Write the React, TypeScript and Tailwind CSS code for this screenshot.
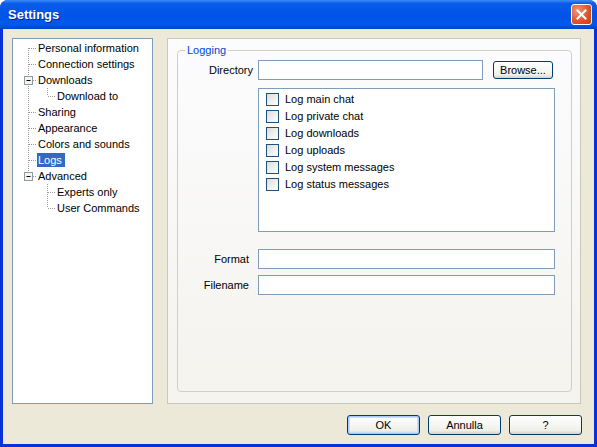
import type { ReactNode } from 'react';

const font = "font-['Liberation_Sans',Arial,sans-serif]";

type TreeItem = {
  label: string;
  level: 1 | 2;
  first?: boolean;
  last?: boolean;
  expander?: boolean;
  parentLast?: boolean;
  selected?: boolean;
};

const treeItems: TreeItem[] = [
  { label: 'Personal information', level: 1, first: true },
  { label: 'Connection settings', level: 1 },
  { label: 'Downloads', level: 1, expander: true },
  { label: 'Download to', level: 2, last: true },
  { label: 'Sharing', level: 1 },
  { label: 'Appearance', level: 1 },
  { label: 'Colors and sounds', level: 1 },
  { label: 'Logs', level: 1, selected: true },
  { label: 'Advanced', level: 1, expander: true, last: true },
  { label: 'Experts only', level: 2, parentLast: true },
  { label: 'User Commands', level: 2, last: true, parentLast: true },
];

const logOptions = [
  'Log main chat',
  'Log private chat',
  'Log downloads',
  'Log uploads',
  'Log system messages',
  'Log status messages',
];

const dot = { stroke: '#9A9A9A', strokeWidth: 1, strokeDasharray: '1 1' };

function Connector({ item }: { item: TreeItem }) {
  const w = item.level === 1 ? 24 : 43;
  return (
    <svg width={w} height={16} className="shrink-0">
      {item.level === 1 ? (
        <>
          <line x1={15.5} x2={15.5} y1={item.first ? 8 : 0} y2={item.last ? 8 : 16} {...dot} />
          <line x1={16} x2={24} y1={8.5} y2={8.5} {...dot} />
          {item.expander && (
            <>
              <rect x={11.5} y={4.5} width={8} height={8} fill="#F4F4F0" stroke="#8C9AA8" />
              <line x1={13.5} x2={17.5} y1={8.5} y2={8.5} stroke="#000" />
            </>
          )}
        </>
      ) : (
        <>
          {!item.parentLast && <line x1={15.5} x2={15.5} y1={0} y2={16} {...dot} />}
          <line x1={34.5} x2={34.5} y1={0} y2={item.last ? 8 : 16} {...dot} />
          <line x1={35} x2={43} y1={8.5} y2={8.5} {...dot} />
        </>
      )}
    </svg>
  );
}

function TreeView() {
  return (
    <div className="w-[141px] h-[366px] bg-white border border-[#7F9DB9] pt-px">
      {treeItems.map((item) => (
        <div key={item.label} className="flex items-center h-[16px]">
          <Connector item={item} />
          <span
            className={
              item.selected
                ? 'h-[14px] leading-[14px] pl-px pr-[3px] bg-[#316AC5] text-white'
                : 'h-[14px] leading-[14px] pl-px pr-[3px] text-black'
            }
          >
            {item.label}
          </span>
        </div>
      ))}
    </div>
  );
}

function TextBox({ className }: { className: string }) {
  return <div className={`h-[20px] bg-white border border-[#7F9DB9] ${className}`} />;
}

function XpButton({ children, isDefault, className }: { children: ReactNode; isDefault?: boolean; className: string }) {
  return (
    <button
      className={`${className} flex items-center justify-center rounded-[3px] border border-[#003C74] bg-[linear-gradient(to_bottom,#FFFFFF,#F0F0EA_80%,#D6D0C5)] text-[11px] text-black ${
        isDefault ? 'shadow-[inset_0_0_0_1px_#A9C9F7,inset_0_0_0_2px_#C9DDF9]' : ''
      }`}
    >
      {children}
    </button>
  );
}

function Checkbox({ label }: { label: string }) {
  return (
    <div className="flex items-center h-[17px]">
      <div className="w-[13px] h-[13px] border border-[#1C5180] bg-[linear-gradient(135deg,#DCDCD7,#FFFFFF)]" />
      <span className="ml-[6px] text-black">{label}</span>
    </div>
  );
}

export default function App() {
  return (
    <div className={`${font} text-[11px] w-[597px] h-[447px] bg-[#0831D9] rounded-t-[8px] flex flex-col overflow-hidden`}>
      {/* Title bar */}
      <div className="h-[29px] shrink-0 flex items-center justify-between pl-[8px] pr-[5px] bg-[linear-gradient(to_bottom,#3C8CF7_0%,#0A5CEA_12%,#0054E6_50%,#0058EE_85%,#0043C6_100%)]">
        <span className="text-white font-bold text-[13px] [text-shadow:1px_1px_#0A1F8F]">Settings</span>
        <div className="w-[21px] h-[21px] rounded-[3px] border border-white bg-[radial-gradient(circle_at_30%_30%,#F0937A,#E0502A_60%,#C43C16)] flex items-center justify-center">
          <svg width={11} height={11} viewBox="0 0 11 11">
            <line x1={1.5} y1={1.5} x2={9.5} y2={9.5} stroke="#fff" strokeWidth={2} strokeLinecap="square" />
            <line x1={9.5} y1={1.5} x2={1.5} y2={9.5} stroke="#fff" strokeWidth={2} strokeLinecap="square" />
          </svg>
        </div>
      </div>

      {/* Client area */}
      <div className="flex-1 mx-[3px] mb-[3px] bg-[#ECE9D8] flex flex-col">
        <div className="flex pt-[9px] pl-[9px]">
          <TreeView />

          <div className="ml-[14px] w-[414px] h-[366px] border border-[#C9C7BA] bg-[linear-gradient(to_bottom,#FCFCFE,#F4F3EE)] flex flex-col">
            <fieldset className="flex-1 ml-[9px] mr-[8px] mt-[5px] mb-[11px] border border-[#D0D0BF] rounded-[4px]">
              <legend className="ml-[7px] px-[2px] text-[#0046D5] leading-[13px]">Logging</legend>

              <div className="flex items-start mt-[3px]">
                <span className="w-[75px] mr-[5px] text-right leading-[20px] text-black">Directory</span>
                <TextBox className="w-[225px]" />
                <XpButton className="ml-[10px] mt-px w-[60px] h-[18px]">Browse...</XpButton>
              </div>

              <div className="ml-[80px] mt-[8px] w-[297px] h-[144px] bg-white border border-[#7F9DB9] pt-[2px] pl-[7px]">
                {logOptions.map((o) => (
                  <Checkbox key={o} label={o} />
                ))}
              </div>

              <div className="flex mt-[17px]">
                <span className="w-[71px] mr-[9px] text-right leading-[20px] text-black">Format</span>
                <TextBox className="w-[297px]" />
              </div>
              <div className="flex mt-[6px]">
                <span className="w-[71px] mr-[9px] text-right leading-[20px] text-black">Filename</span>
                <TextBox className="w-[297px]" />
              </div>
            </fieldset>
          </div>
        </div>

        <div className="flex justify-end gap-[8px] mt-[11px] pr-[12px]">
          <XpButton isDefault className="w-[73px] h-[20px]">OK</XpButton>
          <XpButton className="w-[73px] h-[20px]">Annulla</XpButton>
          <XpButton className="w-[73px] h-[20px]">?</XpButton>
        </div>
      </div>
    </div>
  );
}
